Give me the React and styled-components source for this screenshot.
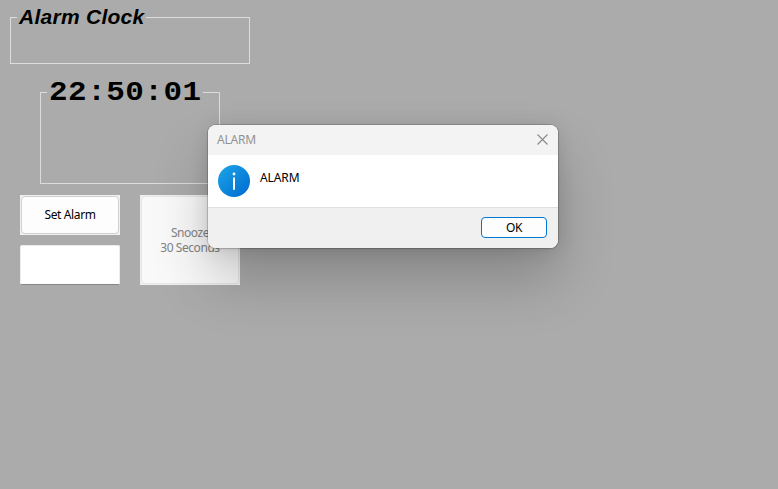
import React from "react";
import styled, { createGlobalStyle } from "styled-components";

const GlobalStyle = createGlobalStyle`
  * { box-sizing: border-box; }
  body { margin: 0; background: #ababab; }
`;

const Window = styled.main`
  position: relative;
  display: flex;
  flex-direction: column;
  width: 778px;
  height: 489px;
  overflow: hidden;
  background: #ababab;
  font: 12px/15px "Noto Sans", "Open Sans", sans-serif;
  color: #000;
`;

const GroupBox = styled.section`
  flex: none;
  width: ${(p) => p.$width}px;
  height: ${(p) => p.$height}px;
  margin: ${(p) => p.$margin};
  border: 1px solid #dcdcdc;
`;

const Caption = styled.h1`
  width: ${(p) => p.$width}px;
  height: 24px;
  margin: -13px 0 0 6px;
  padding-left: 2px;
  background: #ababab;
  line-height: 24px;
  white-space: nowrap;
`;

const TitleCaption = styled(Caption)`
  font-family: "Liberation Sans", Arial, sans-serif;
  font-size: 21px;
  font-style: italic;
  font-weight: 700;
  letter-spacing: 0.27px;
`;

const ClockCaption = styled(Caption)`
  font-family: "Liberation Mono", "Courier New", monospace;
  font-size: 28px;
  font-weight: 700;
  line-height: 26px;
`;

const ClockDigits = styled.span`
  display: inline-block;
  letter-spacing: 0.45px;
  transform: scaleX(1.105);
  transform-origin: left;
`;

const Controls = styled.div`
  display: flex;
  gap: 20px;
  margin: 11px 0 0 20px;
`;

const Column = styled.div`
  display: flex;
  flex-direction: column;
  gap: 10px;
`;

const ButtonFrame = styled.div`
  width: 100px;
  height: ${(p) => p.$height}px;
  padding: 1px;
  background: #f0f0f0;
`;

const Button = styled.button`
  display: flex;
  align-items: center;
  justify-content: center;
  width: 100%;
  height: 100%;
  padding: 0 0 1px;
  border: 1px solid ${(p) => (p.disabled ? "#e6e6e6" : "#d0d0d0")};
  border-radius: 4px;
  background: ${(p) => (p.disabled ? "#f9f9f9" : "#fdfdfd")};
  color: ${(p) => (p.disabled ? "#838383" : "#000")};
  font: inherit;
  letter-spacing: ${(p) => (p.disabled ? "-0.45px" : "-0.37px")};
  text-align: center;
  white-space: pre-line;
`;

const TimeInput = styled.input`
  width: 100px;
  height: 40px;
  border: 1px solid #ececec;
  border-bottom-color: #868686;
  border-radius: 2px;
  background: #fff;
  outline: none;
`;

const Dialog = styled.section`
  position: absolute;
  left: 208px;
  top: 125px;
  display: flex;
  flex-direction: column;
  width: 350px;
  height: 123px;
  overflow: hidden;
  border-radius: 8px;
  background: #fff;
  box-shadow: 0 0 0 1px rgba(0, 0, 0, 0.15), 0 1px 3px rgba(0, 0, 0, 0.1),
    0 32px 56px rgba(0, 0, 0, 0.21), 0 2px 20px rgba(0, 0, 0, 0.11);
`;

const TitleBar = styled.header`
  display: flex;
  align-items: center;
  justify-content: space-between;
  height: 30px;
  padding: 0 10px 2px 9px;
  background: #f3f3f3;
  color: #929292;
  letter-spacing: -0.2px;
`;

const Message = styled.div`
  display: flex;
  gap: 10px;
  height: 52px;
  padding: 10px;
  letter-spacing: -0.1px;
`;

const MessageText = styled.p`
  margin: 5px 0 0;
`;

const Footer = styled.footer`
  display: flex;
  justify-content: flex-end;
  height: 41px;
  padding: 9px 11px 0 0;
  border-top: 1px solid #dfdfdf;
  background: #f0f0f0;
`;

const OkButton = styled.button`
  width: 66px;
  height: 21px;
  padding: 0;
  border: 1px solid #0078d4;
  border-radius: 4px;
  background: #fdfdfd;
  color: #000;
  font: inherit;
  line-height: 19px;
  letter-spacing: -0.3px;
`;

const InfoIcon = () => (
  <svg width="32" height="32" viewBox="0 0 32 32">
    <defs>
      <linearGradient id="info" x1="0" y1="0" x2="1" y2="1">
        <stop offset="0.1" stopColor="#1ba0e5" />
        <stop offset="0.9" stopColor="#006fd2" />
      </linearGradient>
    </defs>
    <circle cx="16" cy="16" r="16" fill="url(#info)" />
    <circle cx="16" cy="9" r="1.4" fill="#fff" />
    <path d="M16 12.5v12.3" stroke="#fff" strokeWidth="2" />
  </svg>
);

const CloseIcon = () => (
  <svg width="11" height="11" viewBox="0 0 11 11">
    <path d="M.5.5l10 10M10.5.5l-10 10" stroke="#888" strokeWidth="1.1" />
  </svg>
);

export default function App() {
  return (
    <Window>
      <GlobalStyle />
      <GroupBox $width={240} $height={47} $margin="17px 0 0 10px">
        <TitleCaption $width={129}>Alarm Clock</TitleCaption>
      </GroupBox>
      <GroupBox $width={180} $height={92} $margin="28px 0 0 40px">
        <ClockCaption $width={156}>
          <ClockDigits>22:50:01</ClockDigits>
        </ClockCaption>
      </GroupBox>
      <Controls>
        <Column>
          <ButtonFrame $height={40}>
            <Button>Set Alarm</Button>
          </ButtonFrame>
          <TimeInput aria-label="Alarm time" />
        </Column>
        <ButtonFrame $height={90}>
          <Button disabled>{"Snooze\n30 Seconds"}</Button>
        </ButtonFrame>
      </Controls>
      <Dialog role="dialog" aria-label="ALARM">
        <TitleBar>
          <span>ALARM</span>
          <CloseIcon />
        </TitleBar>
        <Message>
          <InfoIcon />
          <MessageText>ALARM</MessageText>
        </Message>
        <Footer>
          <OkButton>OK</OkButton>
        </Footer>
      </Dialog>
    </Window>
  );
}
